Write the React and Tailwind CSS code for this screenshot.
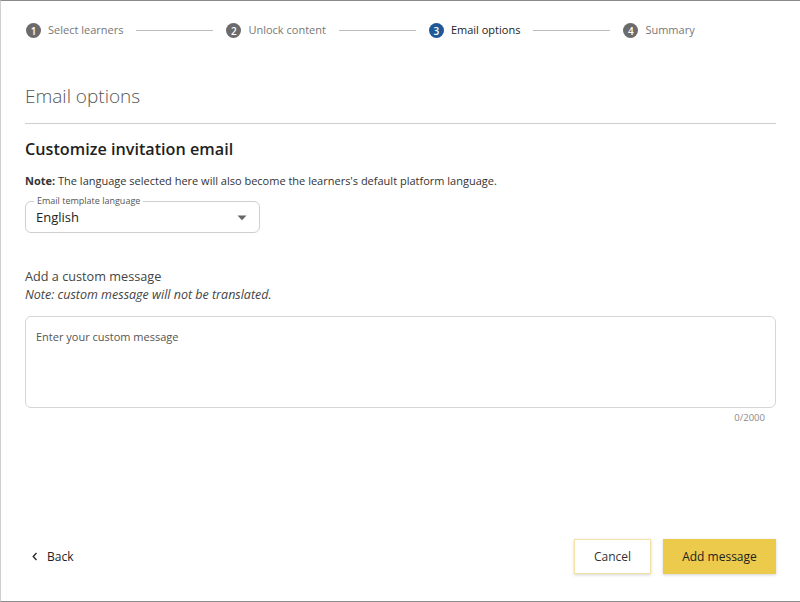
import React from "react";

function Step({ n, label, active }) {
  return (
    <div className="flex items-center gap-[7px]">
      <span
        className={
          "flex h-[15px] w-[15px] items-center justify-center rounded-full text-[10px] font-semibold leading-none text-white " +
          (active ? "bg-[#1f5a96]" : "bg-[#6b6b6b]")
        }
      >
        {n}
      </span>
      <span className={"text-[11px] " + (active ? "text-[#222]" : "text-[#777]")}>{label}</span>
    </div>
  );
}

function Line() {
  return <div className="mx-[13px] h-px w-[77px] bg-[#bdbdbd]" />;
}

export default function App() {
  return (
    <div
      className="flex h-[602px] w-[800px] flex-col border-t border-b border-l border-t-[#8a8a8a] border-b-[#8a8a8a] border-l-[#cfcfcf] bg-white"
      style={{ fontFamily: '"Open Sans", "Noto Sans", sans-serif' }}
    >
      <div className="flex h-[57px] items-center pl-[25px] pt-[2px]">
        <Step n="1" label="Select learners" />
        <Line />
        <Step n="2" label="Unlock content" />
        <Line />
        <Step n="3" label="Email options" active />
        <Line />
        <Step n="4" label="Summary" />
      </div>

      <div className="flex flex-1 flex-col px-[24px]">
        <h1 className="mt-[25px] text-[19px] font-light leading-[26px] text-[#555]">Email options</h1>
        <div className="mt-[14px] h-px bg-[#cfcfcf]" />

        <h2 className="mt-[14px] text-[16.2px] font-semibold leading-[22px] text-[#1f1f1f]">
          Customize invitation email
        </h2>
        <p className="mt-[13px] text-[11px] leading-[16px] text-[#333]">
          <span className="font-bold">Note:</span> The language selected here will also become the learners's default platform language.
        </p>

        <div className="relative mt-[12px] flex h-[32px] w-[235px] items-center justify-between rounded-[6px] border border-[#cfcfcf] pl-[10px] pr-[12px]">
          <span className="absolute -top-[7px] left-[8px] bg-white px-[3px] text-[9px] leading-[12px] text-[#555]">
            Email template language
          </span>
          <span className="pt-[2px] text-[13px] text-[#222]">English</span>
          <svg width="10" height="6" viewBox="0 0 10 6" className="mt-[1px]">
            <path d="M0.5 0.5 L9.5 0.5 L5 5.2 Z" fill="#666" />
          </svg>
        </div>

        <p className="mt-[34px] text-[12.7px] leading-[18px] text-[#444]">Add a custom message</p>
        <p className="mt-[1px] text-[12.5px] italic leading-[18px] text-[#444]">
          Note: custom message will not be translated.
        </p>

        <div className="mt-[12px] h-[92px] rounded-[6px] border border-[#d6d6d6] px-[10px] pt-[6px]">
          <span className="text-[11px] text-[#555]">Enter your custom message</span>
        </div>
        <div className="mt-[3px] pr-[11px] text-right text-[9.5px] leading-[14px] text-[#8a8a8a]">0/2000</div>

        <div className="mt-auto mb-[27px] flex items-center justify-between">
          <div className="flex items-center gap-[9px] pl-[7px]">
            <svg width="6" height="9" viewBox="0 0 6 9">
              <path d="M4.5 1 L1.2 4.5 L4.5 8" fill="none" stroke="#222" strokeWidth="1.3" />
            </svg>
            <span className="text-[12px] text-[#222]">Back</span>
          </div>
          <div className="flex items-center gap-[12px]">
            <button className="h-[35px] w-[77px] border border-[#f3e3a6] bg-white text-[12px] text-[#333] shadow-[0_1px_3px_rgba(0,0,0,0.18)]">
              Cancel
            </button>
            <button className="h-[35px] w-[113px] bg-[#ecca4c] text-[12px] text-[#222] shadow-[0_1px_3px_rgba(0,0,0,0.18)]">
              Add message
            </button>
          </div>
        </div>
      </div>
    </div>
  );
}
